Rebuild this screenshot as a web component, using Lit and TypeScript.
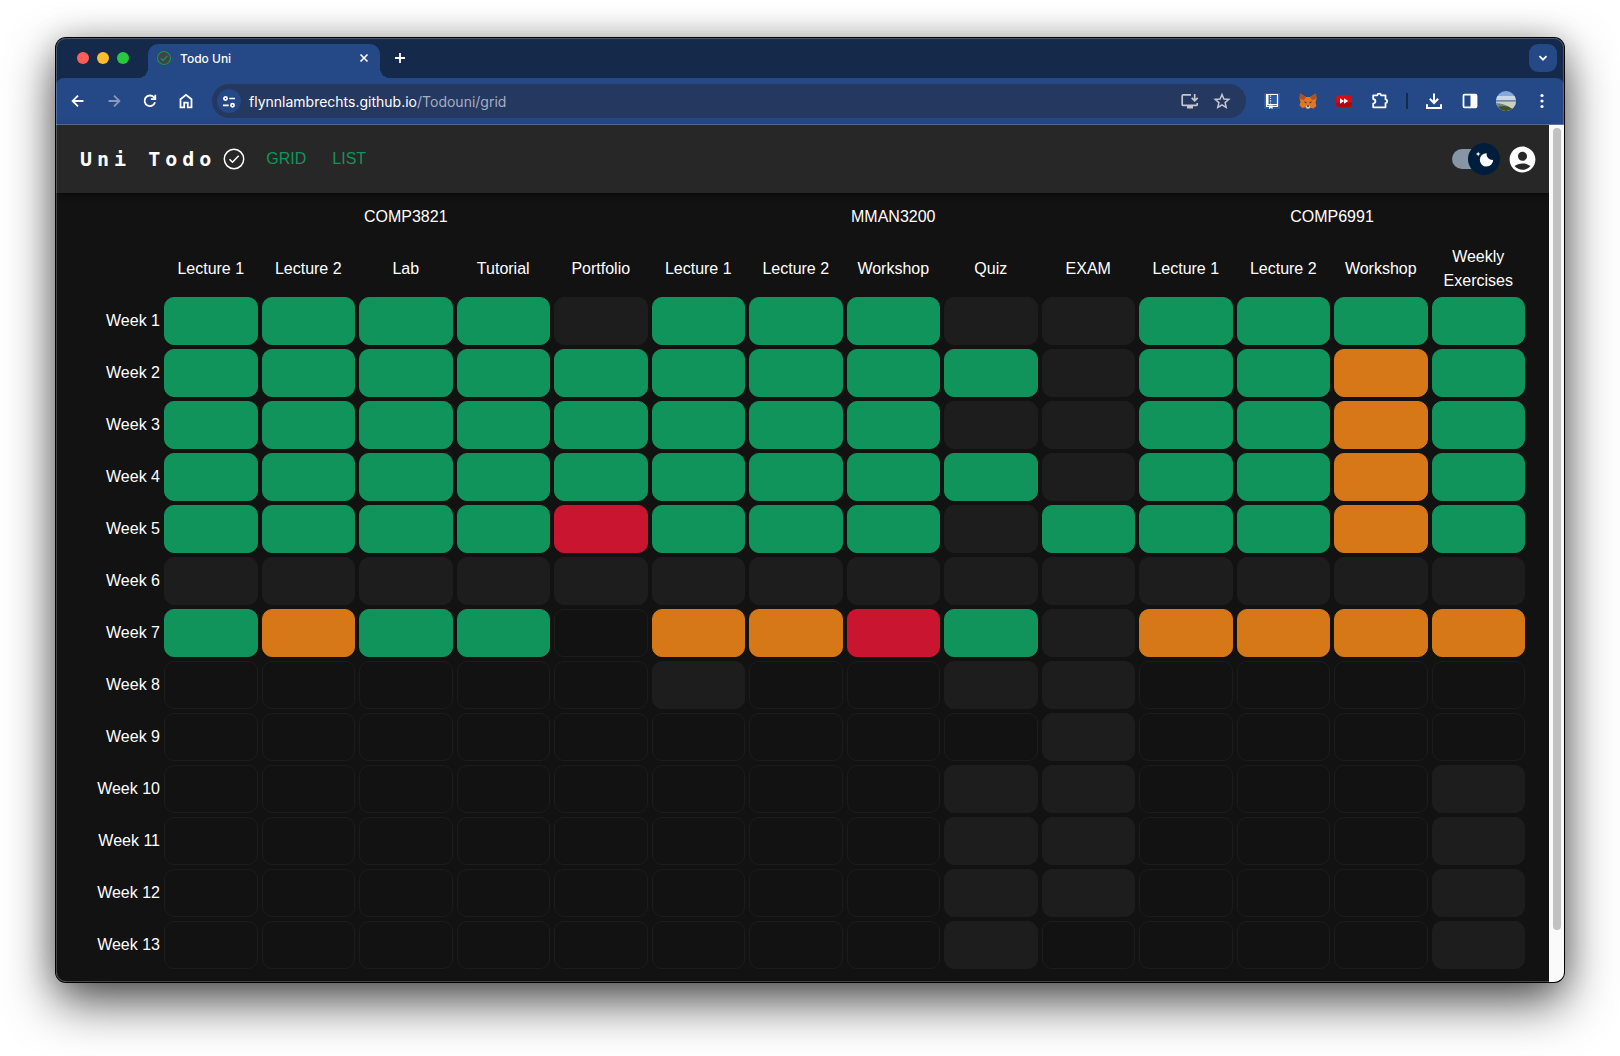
import { LitElement, html, css, svg } from "lit";
import { customElement } from "lit/decorators.js";

// One character per cell: g done, o partly done, r missed, x not applicable, . open
const WEEKS = [
  "ggggxgggxxgggg",
  "gggggggggxggog",
  "ggggggggxxggog",
  "gggggggggxggog",
  "ggggrgggxgggog",
  "xxxxxxxxxxxxxx",
  "gogg.oorgxoooo",
  ".....x..xx....",
  ".........x....",
  "........xx...x",
  "........xx...x",
  "........xx...x",
  "........x....x",
];
const COURSES = [
  { name: "COMP3821", tasks: ["Lecture 1", "Lecture 2", "Lab", "Tutorial", "Portfolio"] },
  { name: "MMAN3200", tasks: ["Lecture 1", "Lecture 2", "Workshop", "Quiz", "EXAM"] },
  { name: "COMP6991", tasks: ["Lecture 1", "Lecture 2", "Workshop", "Weekly Exercises"] },
];
const STATE: Record<string, [string, string]> = {
  g: ["done", "done"],
  o: ["partial", "in progress"],
  r: ["missed", "missed"],
  x: ["none", "not scheduled"],
  ".": ["open", "to do"],
};
const TASKS = COURSES.flatMap((c) => c.tasks.map((t) => `${c.name} ${t}`));

const icon = (body: unknown, size = 20, box = 20) => html`<svg
  width=${size} height=${size} viewBox="0 0 ${box} ${box}" fill="none"
  stroke="currentColor" stroke-width="2" aria-hidden="true">${body}</svg>`;

const base = css`
  :host { display: block; box-sizing: border-box; }
  *, *::before, *::after { box-sizing: border-box; }
  button {
    appearance: none; border: 0; padding: 0; margin: 0;
    background: none; color: inherit; font: inherit; cursor: pointer;
  }
  svg { display: block; flex: none; }
`;

@customElement("browser-chrome")
export class BrowserChrome extends LitElement {
  static styles = [base, css`
    :host { color: #fff; font-family: Inter, "Liberation Sans", sans-serif; }
    .strip { display: flex; align-items: flex-end; height: 40px; background: #15294b; padding: 0 7px 0 21px; }
    .lights { display: flex; gap: 8px; align-self: center; margin-right: 19px; }
    .light { width: 12px; height: 12px; border-radius: 50%; }
    .close { background: #ff5f57; }
    .min { background: #febc2e; }
    .max { background: #28c840; }
    .tab {
      position: relative; display: flex; align-items: center; gap: 8px;
      width: 232px; height: 34px; padding: 0 11px 6px 8px;
      border-radius: 10px 10px 0 0; background: #254886; font-size: 12px; font-weight: 500;
    }
    .tab::before, .tab::after {
      content: ""; position: absolute; bottom: 0; width: 10px; height: 10px;
    }
    .tab::before { right: 100%; background: radial-gradient(circle at 0 0, transparent 10px, #254886 10px); }
    .tab::after { left: 100%; background: radial-gradient(circle at 100% 0, transparent 10px, #254886 10px); }
    .label { flex: 1; }
    .add { align-self: center; margin-left: 12px; }
    .chevron {
      display: grid; place-items: center; width: 28px; height: 28px; margin: 0 0 6px auto;
      border-radius: 9px; background: #254886;
    }
    .under { background: #15294b; }
    .bar {
      display: flex; align-items: center; height: 47px; padding: 0 12px; border-radius: 8px 8px 0 0;
      background: #254886; border-bottom: 1px solid #5b76a6;
    }
    .nav { display: flex; gap: 16px; margin-right: 16px; }
    .dim { opacity: .45; }
    .address {
      flex: 1; display: flex; align-items: center; height: 34px; padding: 0 14px 0 5px;
      border-radius: 17px; background: #253860; font-size: 14px; gap: 8px;
    }
    .site { display: grid; place-items: center; width: 24px; height: 24px; border-radius: 50%; background: #254886; }
    .url {
      flex: 1; min-width: 0; border: 0; padding: 0; background: none;
      color: inherit; font: inherit; text-decoration: none;
    }
    .path { color: #a4aec4; }
    .tools { display: flex; gap: 12px; color: #c3c6ce; }
    .exts { display: flex; align-items: center; gap: 16px; margin-left: 16px; }
    .sep { width: 2px; height: 16px; background: #15294b; }
  `];

  render() {
    return html`
      <div class="strip">
        <div class="lights">
          <button class="light close" aria-label="Close window"></button>
          <button class="light min" aria-label="Minimise window"></button>
          <button class="light max" aria-label="Zoom window"></button>
        </div>
        <div class="tab">
          ${icon(svg`<circle cx="8" cy="8" r="7.5" fill="#404248" stroke="none"/><circle cx="8" cy="8" r="6.5" stroke="#11945b" stroke-width="1.2"/><path d="M4.8 8.3 7 10.5l4.3-4.6" stroke="#11945b" stroke-width="1.3"/>`, 16, 16)}
          <span class="label">Todo Uni</span>
          <button aria-label="Close tab">${icon(svg`<path d="m1.5 1.5 7 7m0-7-7 7" stroke-width="1.6"/>`, 10, 10)}</button>
        </div>
        <button class="add" aria-label="New tab">${icon(svg`<path d="M8 3v10M3 8h10" stroke-width="1.8"/>`, 16, 16)}</button>
        <button class="chevron" aria-label="Search tabs">${icon(svg`<path d="m1.5 3.2 3.5 3.5 3.5-3.5" stroke-width="1.8"/>`, 10, 10)}</button>
      </div>
      <div class="under"><div class="bar">
        <div class="nav">
          <button aria-label="Back">${icon(svg`<path d="M15.500 10H5M10 4.600 4.600 10l5.400 5.400" stroke-width="1.800"/>`)}</button>
          <button class="dim" aria-label="Forward">${icon(svg`<path d="M4.500 10H15M10 4.600 15.400 10 10 15.400" stroke-width="1.800"/>`)}</button>
          <button aria-label="Reload">${icon(svg`<path d="M15 11.200A5.300 5.300 0 1 1 13.800 6.200L15 7.500M15.300 3.800v4.400h-4.400" stroke-width="1.800"/>`)}</button>
          <button aria-label="Home">${icon(svg`<path d="M4.500 8.200 10 3.900l5.500 4.300v8.100h-3.700v-4.700H8.200v4.700H4.500z" stroke-width="1.800"/>`)}</button>
        </div>
        <div class="address">
          <button class="site" aria-label="Site information">${icon(svg`<g stroke-width="1.700"><circle cx="3.500" cy="4.500" r="1.600"/><path d="M7.300 4.500H13M1 11.300h5.700"/><circle cx="10.500" cy="11.300" r="1.600"/></g>`, 14, 14)}</button>
          <a class="url" href="#grid">flynnlambrechts.github.io<span class="path">/Todouni/grid</span></a>
          <div class="tools">
            <button aria-label="Install app">${icon(svg`<path d="M11 3.800H3.200a1 1 0 0 0-1 1v8.600a1 1 0 0 0 1 1h13a1 1 0 0 0 1-1V12M14.700 3v6.500M11.700 6.800l3 3 3-3" stroke-width="1.700"/><path d="M7 16.200h6" stroke-width="2.400"/>`)}</button>
            <button aria-label="Bookmark">${icon(svg`<path d="m10 3.500 1.900 4.500 4.900.4-3.700 3.200 1.100 4.800-4.200-2.600-4.200 2.600 1.100-4.800-3.700-3.200 4.900-.4z" stroke-width="1.500"/>`)}</button>
          </div>
        </div>
        <div class="exts">
          <button aria-label="Notebook">${icon(svg`<path d="M2 2h16v16H2z" fill="#2c5aa6" stroke="none"/><path d="M4.500 3.500h11v12h-11z" stroke-width="1.200"/><path d="M4 3h2.500v11H4zM4 13h12v1.200H4z" fill="#fff" stroke="none"/><path d="M8.500 4.500v8" stroke-width="1.200" stroke-dasharray="1.200 1.200"/><path d="M7 14.500h3.500v3.800l-1.700-1.500L7 18.300z" fill="#fff" stroke="none"/>`)}</button>
          <button aria-label="Wallet">${icon(svg`<g stroke="none"><path d="m2 2.500 6 3.500h4l6-3.500.6 5-1 4 .9 3.500-3 2.500-3-.8L11 17.500H9L7.500 16.200l-3 .8-3-2.500 1-3.500-1-3.500z" fill="#e27625"/><path d="m2 2.500 6 3.500-2 3-4-1zM18 2.500 12 6l2 3 4-1z" fill="#a9541f"/><path d="M7.800 14.700h4.400l-.8 2.800H8.600z" fill="#d9d0c8"/><path d="m5.500 10.500 3 .5-.3 1.400zM14.500 10.500l-3 .5.300 1.400zM8.800 14.500h2.400l-.3 1.300H9.100z" fill="#233447"/></g>`, 20, 20)}</button>
          <button aria-label="Playback speed">${icon(svg`<g stroke="none"><rect x="2" y="4" width="16" height="12" rx="3.500" fill="#d60d16"/><path d="M2 11.500h16v1A3.500 3.500 0 0 1 14.500 16h-9A3.500 3.500 0 0 1 2 12.500z" fill="#ab0810"/><path d="m6 7.200 4 2.800-4 2.800zM10 7.200l4.200 2.800-4.200 2.800z" fill="#fff"/></g>`)}</button>
          <button aria-label="Extensions">${icon(svg`<path d="M3.200 4.300h4.100q.2-1.700 1.900-1.700t1.900 1.700h4.400v4.100q1.700.2 1.700 1.900t-1.700 1.900v4.100H3.200v-3.700q2.200-.4 2.200-2.300T3.200 8z" stroke-linejoin="round" stroke-width="1.800"/>`)}</button>
          <span class="sep"></span>
          <button aria-label="Downloads">${icon(svg`<path d="M10 2.500v9M5.800 7.700 10 12l4.200-4.300M3 13.200v3.700h14v-3.700" stroke-width="2"/>`)}</button>
          <button aria-label="Side panel">${icon(svg`<rect x="3.500" y="3.700" width="13" height="12.600" rx="1" stroke-width="1.800"/><path d="M10.500 3.700h6v12.600h-6z" fill="#fff" stroke="none"/>`)}</button>
          <button aria-label="Profile">${icon(svg`<defs><clipPath id="c"><circle cx="10" cy="10" r="10"/></clipPath></defs><g clip-path="url(#c)" stroke="none"><path d="M0 0h20v20H0z" fill="#86a9dc"/><path d="M0 5h20v5H0z" fill="#c9d6e6"/><path d="M0 9h20v1.800H0z" fill="#6d8ba5"/><path d="M0 10.800h20V20H0z" fill="#cfccc0"/><path d="M0 12q8 .5 13 4l3 4H0z" fill="#6f8288"/><path d="M2 16q8-2.500 14 1.500V20H2z" fill="#3e5426"/></g>`)}</button>
          <button aria-label="Menu">${icon(svg`<g fill="currentColor" stroke="none"><circle cx="10" cy="4.500" r="1.600"/><circle cx="10" cy="10" r="1.600"/><circle cx="10" cy="15.500" r="1.600"/></g>`)}</button>
        </div>
      </div></div>`;
  }
}

@customElement("app-header")
export class AppHeader extends LitElement {
  static styles = [base, css`
    :host {
      display: flex; align-items: center; height: 68px; padding: 0 11px 0 24px;
      background: #272727; color: #fff; font: 16px/24px "Liberation Sans", sans-serif;
      box-shadow: 0 2px 6px rgba(0, 0, 0, .5);
    }
    .brand {
      display: flex; align-items: center; gap: 6px; margin: 0;
      font: 700 20px/32px "DejaVu Sans Mono", monospace; letter-spacing: 5px;
    }
    .links { display: flex; gap: 26px; margin-left: 20px; flex: 1; }
    .link { color: #11945b; text-decoration: none; }
    .switch { position: relative; display: flex; align-items: center; width: 48px; height: 32px; cursor: pointer; }
    .switch input { position: absolute; inset: 0; margin: 0; opacity: 0; }
    .track { width: 40px; height: 20px; border-radius: 10px; background: #8796a5; }
    .thumb {
      position: absolute; right: 0; top: 0; display: grid; place-items: center;
      width: 32px; height: 32px; border-radius: 50%; background: #001e3c;
    }
    .account { margin-left: 7px; }
  `];

  render() {
    return html`
      <h1 class="brand">Uni Todo
        ${icon(svg`<circle cx="12" cy="12" r="9.700" stroke-width="1.500"/><path d="m7.500 12.300 3 3 6.200-6.500" stroke-width="1.500"/>`, 24, 24)}
      </h1>
      <nav class="links">
        <a class="link" href="#grid">GRID</a>
        <a class="link" href="#list">LIST</a>
      </nav>
      <label class="switch">
        <input type="checkbox" aria-label="Dark mode" checked />
        <span class="track"></span>
        <span class="thumb">${icon(svg`<path fill="#fff" stroke="none" d="M4.200 2.500l-.7 1.800-1.800.7 1.800.7.700 1.800.6-1.800L6.700 5l-1.900-.7-.6-1.800zm15 8.300a6.700 6.700 0 1 1-6.600-6.600 5.800 5.800 0 0 0 6.600 6.600z"/>`)}</span>
      </label>
      <button class="account" aria-label="Account">
        ${icon(svg`<path fill="#fff" stroke="none" d="M12 2C6.480 2 2 6.480 2 12s4.480 10 10 10 10-4.480 10-10S17.520 2 12 2zm0 4c1.930 0 3.500 1.570 3.500 3.500S13.930 13 12 13s-3.500-1.570-3.500-3.500S10.070 6 12 6zm0 14c-2.030 0-4.430-.82-6.140-2.880C7.550 15.800 9.680 15 12 15s4.450.8 6.140 2.120C16.430 19.180 14.030 20 12 20z"/>`, 31, 24)}
      </button>`;
  }
}

@customElement("week-grid")
export class WeekGrid extends LitElement {
  static styles = [base, css`
    :host { padding: 0 22px 11px; color: #fff; font: 16px/24px "Liberation Sans", sans-serif; }
    table { width: 100%; table-layout: fixed; border-collapse: separate; border-spacing: 0; }
    th { font-weight: 400; padding: 2px; }
    td { padding: 2px; }
    .corner { width: 84px; }
    .courses th { height: 50px; padding-bottom: 4px; }
    .tasks th { height: 52px; }
    .week { text-align: right; white-space: nowrap; }
    .cell { display: block; width: 100%; height: 48px; border: 1px solid #1c1c1c; border-radius: 10px; }
    .done { background: #11945b; border-color: #11945b; }
    .partial { background: #d67817; border-color: #d67817; }
    .missed { background: #ca1531; border-color: #ca1531; }
    .none { background: #1d1d1d; border-color: #1d1d1d; }
  `];

  render() {
    return html`
      <table>
        <thead>
          <tr class="courses">
            <td class="corner"></td>
            ${COURSES.map((c) => html`<th scope="colgroup" colspan=${c.tasks.length}>${c.name}</th>`)}
          </tr>
          <tr class="tasks">
            <td></td>
            ${COURSES.flatMap((c) => c.tasks).map((t) => html`<th scope="col">${t}</th>`)}
          </tr>
        </thead>
        <tbody>
          ${WEEKS.map((row, w) => html`<tr>
            <th class="week" scope="row">Week ${w + 1}</th>
            ${[...row].map((s, i) => html`<td><button class="cell ${STATE[s][0]}"
              aria-label="Week ${w + 1}, ${TASKS[i]}: ${STATE[s][1]}"></button></td>`)}
          </tr>`)}
        </tbody>
      </table>`;
  }
}

@customElement("app-root")
export class AppRoot extends LitElement {
  static styles = [base, css`
    :host { min-height: 100vh; padding: 38px 56px 74px; background: #fff; overflow: hidden; }
    .window {
      position: relative; overflow: hidden; border-radius: 10px; background: #121212;
    }
    .frame {
      border-radius: 10px;
      box-shadow: 0 0 0 1px #000, 0 20px 50px rgba(0, 0, 0, .68), 0 0 30px rgba(0, 0, 0, .2);
    }
    .window::after {
      content: ""; position: absolute; inset: 0; border-radius: 10px; pointer-events: none;
      border: 1px solid rgba(255, 255, 255, .22);
    }
    .view { display: flex; }
    .page { flex: 1; min-width: 0; }
    .scroll { display: flex; width: 15px; padding: 3px 3px 52px 4px; background: #fafafa; }
    .handle { flex: 1; border-radius: 4px; background: #c1c1c1; }
  `];

  render() {
    return html`
      <div class="frame"><div class="window">
        <browser-chrome></browser-chrome>
        <div class="view">
          <main class="page">
            <app-header></app-header>
            <week-grid></week-grid>
          </main>
          <div class="scroll"><div class="handle"></div></div>
        </div>
      </div></div>`;
  }
}
